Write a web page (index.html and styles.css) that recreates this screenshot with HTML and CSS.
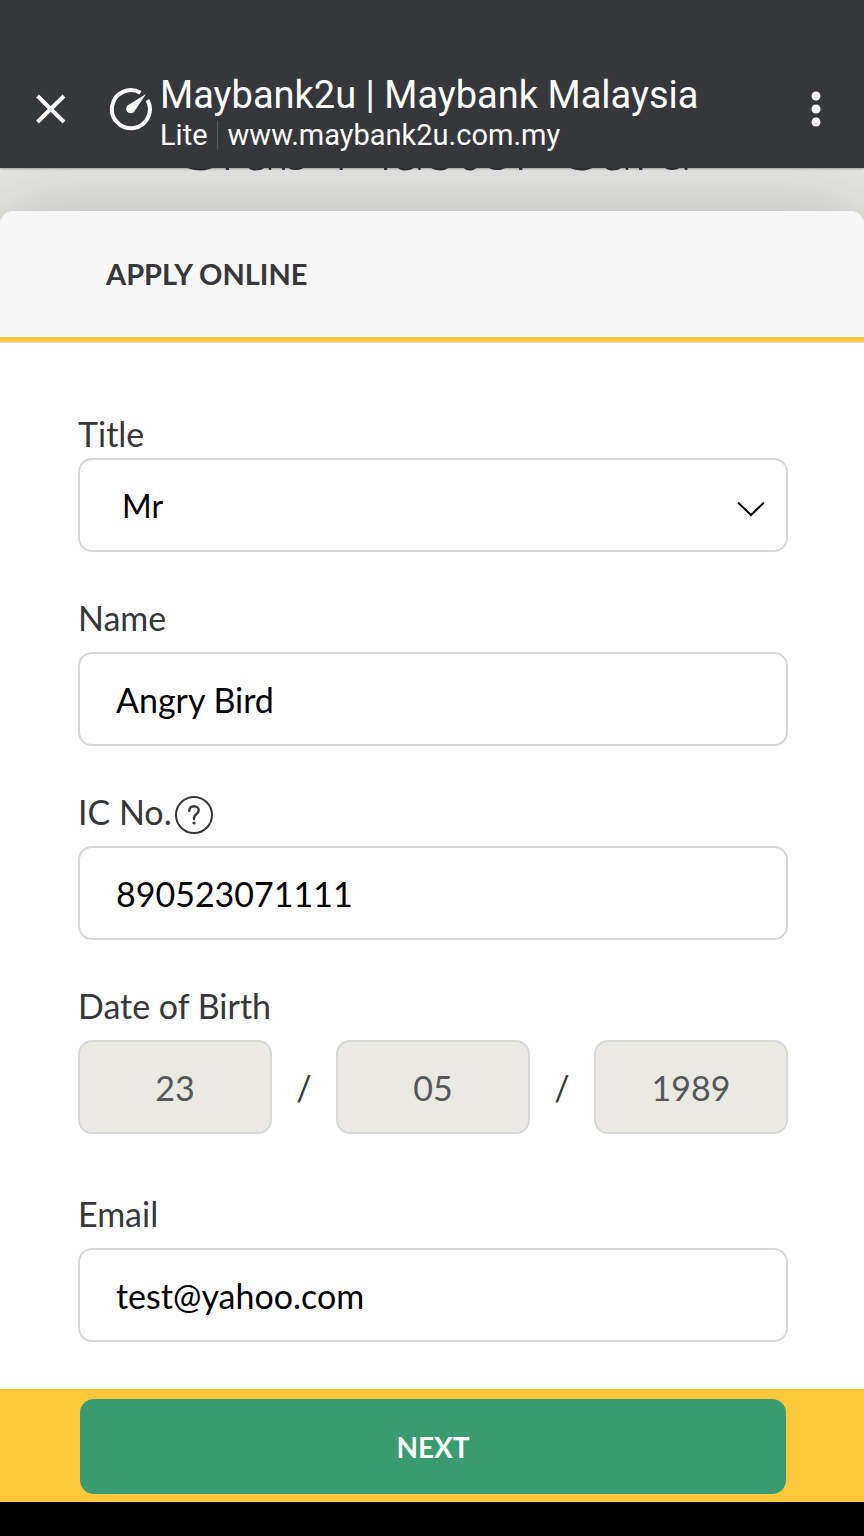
FILE: index.html
```html
<!DOCTYPE html>
<html lang="en">
<head>
  <meta charset="UTF-8" />
  <title>Maybank2u | Maybank Malaysia</title>
  <meta name="viewport" content="width=device-width, initial-scale=1.0"/>
  <link rel="stylesheet" href="styles.css">
</head>
<body>

<header class="browser-bar">
  <button class="icon-btn close" aria-label="Close">
    <svg width="30" height="30" viewBox="0 0 30 30"><path d="M1.5 2L28 28M28 2L1.5 28" fill="none" stroke="#fff" stroke-width="4"/></svg>
  </button>
  <svg class="gauge" width="44" height="44" viewBox="0 0 44 44">
    <path d="M31.5 5.8A19 19 0 1 0 38.5 13" fill="none" stroke="#fff" stroke-width="4"/>
    <path d="M37 7L25 25A4.4 4.4 0 1 1 18.5 18.5Z" fill="#fff"/>
  </svg>
  <div class="page-info">
    <div class="page-title">Maybank2u | Maybank Malaysia</div>
    <div class="page-url"><span class="lite">Lite</span><span>www.maybank2u.com.my</span></div>
  </div>
  <button class="icon-btn menu" aria-label="Menu">
    <svg width="10" height="36" viewBox="0 0 10 36" fill="#fff"><circle cx="5" cy="5" r="4.5"/><circle cx="5" cy="18" r="4.5"/><circle cx="5" cy="31" r="4.5"/></svg>
  </button>
</header>

<main>
  <div class="backdrop">
    <h1>Grab Master Card</h1>
  </div>

  <form class="sheet">
    <h2 class="sheet-title">APPLY ONLINE</h2>

    <div class="fields">
      <div class="field tight">
        <label for="title">Title</label>
        <div class="select-wrap">
          <select id="title">
            <option>Mr</option>
            <option>Mrs</option>
            <option>Ms</option>
          </select>
          <svg class="chevron" width="30" height="16" viewBox="0 0 30 16"><path d="M2 1.5L15 14L28 1.5" fill="none" stroke="#000" stroke-width="2"/></svg>
        </div>
      </div>

      <div class="field">
        <label for="name">Name</label>
        <input type="text" id="name" value="Angry Bird">
      </div>

      <div class="field">
        <div class="label-row">
          <label for="ic">IC No.</label>
          <button type="button" class="icon-btn" aria-label="Help">
            <svg width="38" height="38" viewBox="0 0 38 38" fill="none" stroke="#36373b" stroke-width="2">
              <circle cx="19" cy="19" r="18"/>
              <path d="M14.3 14.8C14.3 12 16.3 10.2 19 10.2S23.7 12 23.7 14.6C23.7 18.2 19 18.2 19 21.5V23" stroke-width="2.4" stroke-linecap="round"/>
              <circle cx="19" cy="27" r="1.6" fill="#36373b" stroke="none"/>
            </svg>
          </button>
        </div>
        <input type="text" id="ic" value="890523071111">
      </div>

      <div class="field dob-field">
        <label for="day">Date of Birth</label>
        <div class="dob">
          <input type="text" id="day" value="23" aria-label="Day" disabled>
          <span>/</span>
          <input type="text" id="month" value="05" aria-label="Month" disabled>
          <span>/</span>
          <input type="text" id="year" value="1989" aria-label="Year" disabled>
        </div>
      </div>

      <div class="field">
        <label for="email">Email</label>
        <input type="email" id="email" value="test@yahoo.com">
      </div>
    </div>

    <div class="actions">
      <button type="submit" class="next">NEXT</button>
    </div>
  </form>
</main>

</body>
</html>
```
FILE: styles.css
```css
* { box-sizing: border-box; }
body { margin: 0; min-height: 100vh; padding-bottom: 34px; background: #000; color: #36373b; font-family: Lato, sans-serif; display: flex; flex-direction: column; }
main { flex: 1; display: flex; flex-direction: column; overflow: hidden; background: #e6e6e4; }

.icon-btn { padding: 0; border: 0; background: none; display: flex; cursor: pointer; }

.browser-bar {
  position: relative; z-index: 2;
  display: flex; align-items: center;
  padding: 50px 43px 0 36px; height: 168px;
  background: #36373b; color: #fff; font-family: Roboto, sans-serif;
  box-shadow: 0 1px 2px rgba(0,0,0,0.3);
}
.gauge { margin-left: 43px; flex: none; }
.page-info { flex: 1; min-width: 0; padding-top: 5px; margin-left: 7px; white-space: nowrap; }
.page-title { font-size: 38px; line-height: 46px; }
.page-url { font-size: 29px; line-height: 34px; display: flex; align-items: center; }
.lite { line-height: 28px; padding-right: 9px; margin-right: 10px; border-right: 1px solid #5a5b5e; }

.backdrop { height: 43px; overflow: hidden; display: flex; align-items: flex-end; justify-content: center; }
.backdrop h1 { margin: 0 0 26px; font-size: 68px; line-height: 82px; font-weight: 300; white-space: nowrap; }

.sheet {
  flex: 1; display: flex; flex-direction: column;
  background: #fff; border-radius: 14px 14px 0 0;
  box-shadow: 0 0 80px rgba(0,0,0,0.2);
}
.sheet-title {
  margin: 0; padding: 40px 106px; font-size: 29px; line-height: 46px;
  background: #f7f7f7; border-bottom: 5px solid #ffc83d; border-radius: 14px 14px 0 0;
  box-shadow: 0 1px 0 #ddd;
}

.fields { flex: 1; padding: 69px 76px 46px 78px; }
.field { margin-bottom: 43px; display: flex; flex-direction: column; gap: 12px; }
.field.tight { gap: 2px; }
.field:last-child { margin-bottom: 0; }
.dob-field { margin-bottom: 57px; }
label { font-size: 34px; line-height: 45px; }
.label-row { display: flex; align-items: flex-end; gap: 3px; }

input, select {
  width: 100%; height: 94px; padding: 0 36px;
  font: 34px Lato, sans-serif; color: #000; background: #fff;
  border: 2px solid #d8d8d8; border-radius: 14px;
}
select { appearance: none; padding-left: 42px; font-size: 32px; }
.select-wrap { position: relative; }
.chevron { position: absolute; right: 22px; top: 43px; pointer-events: none; }

.dob { display: flex; align-items: center; }
.dob input { flex: 1; min-width: 0; text-align: center; background: #eaeae2; color: #55585a; }
.dob span { width: 64px; text-align: center; font-size: 34px; }

.actions { background: #ffc83d; padding: 10px 78px 8px 80px; }
.next {
  width: 100%; height: 95px; border: 0; border-radius: 14px;
  background: #3a9b71; color: #fff; font: bold 28px Lato, sans-serif; cursor: pointer;
}
```
